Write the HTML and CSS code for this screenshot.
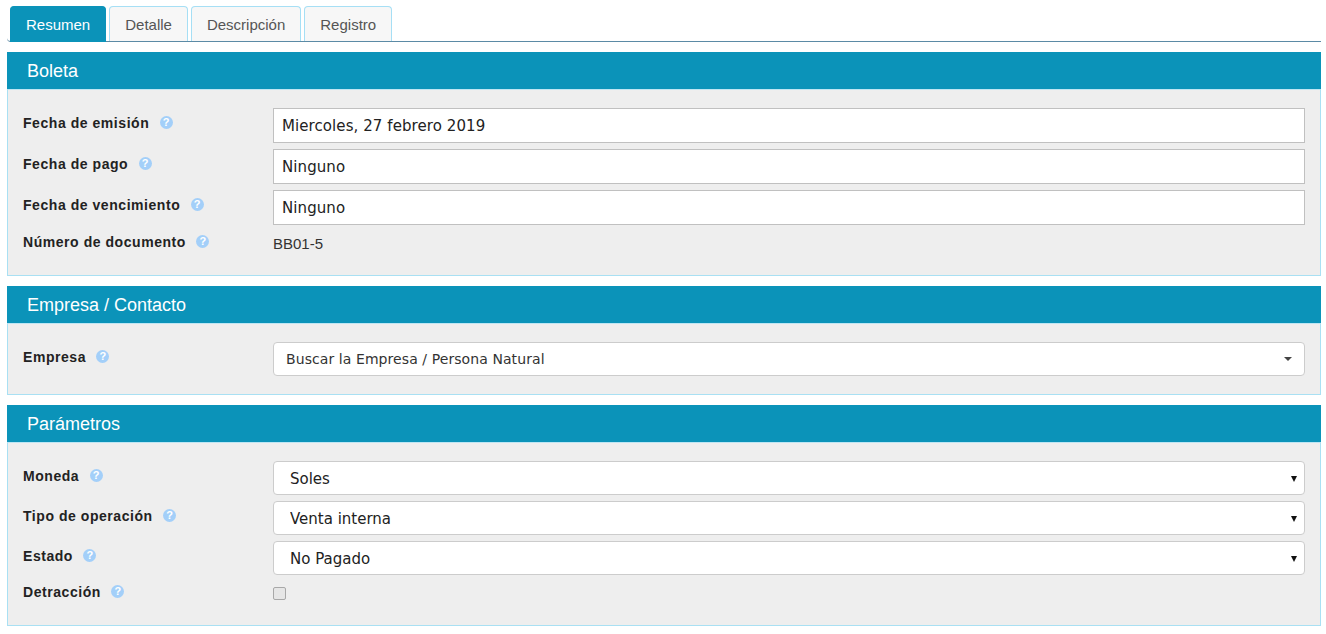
FILE: index.html
```html
<!DOCTYPE html>
<html lang="es">
<head>
<meta charset="utf-8">
<title>Boleta</title>
<link rel="stylesheet" href="styles.css">
</head>
<body>
<ul class="tabs">
  <li class="tab active">Resumen</li>
  <li class="tab">Detalle</li>
  <li class="tab">Descripción</li>
  <li class="tab">Registro</li>
</ul>

<section class="panel panel-boleta">
  <h2 class="panel-head">Boleta</h2>
  <div class="panel-body">
    <div class="row"><label class="label">Fecha de emisión <i class="help">?</i></label><input class="input" type="text" value="Miercoles, 27 febrero 2019"></div>
    <div class="row"><label class="label">Fecha de pago <i class="help">?</i></label><input class="input" type="text" value="Ninguno"></div>
    <div class="row"><label class="label">Fecha de vencimiento <i class="help">?</i></label><input class="input" type="text" value="Ninguno"></div>
    <div class="row row-static"><label class="label">Número de documento <i class="help">?</i></label><span class="static">BB01-5</span></div>
  </div>
</section>

<section class="panel panel-empresa">
  <h2 class="panel-head">Empresa / Contacto</h2>
  <div class="panel-body">
    <div class="row"><label class="label">Empresa <i class="help">?</i></label>
      <div class="combo"><span>Buscar la Empresa / Persona Natural</span><b class="combo-arrow"></b></div>
    </div>
  </div>
</section>

<section class="panel panel-params">
  <h2 class="panel-head">Parámetros</h2>
  <div class="panel-body">
    <div class="row row-select"><label class="label">Moneda <i class="help">?</i></label><div class="select-wrap"><select class="select"><option>Soles</option></select></div></div>
    <div class="row row-select"><label class="label">Tipo de operación <i class="help">?</i></label><div class="select-wrap"><select class="select"><option>Venta interna</option></select></div></div>
    <div class="row row-select"><label class="label">Estado <i class="help">?</i></label><div class="select-wrap"><select class="select"><option>No Pagado</option></select></div></div>
    <div class="row row-check"><label class="label">Detracción <i class="help">?</i></label><input class="check" type="checkbox"></div>
  </div>
</section>
</body>
</html>
```
FILE: styles.css
```css
* { box-sizing: border-box; }
html, body { height: 100%; }
body {
  margin: 0;
  padding: 6px 5px 0 7px;
  background: #fff;
  color: #222;
  font-family: "Liberation Sans", Arial, sans-serif;
  font-size: 14px;
  overflow: hidden;
}
.tabs {
  display: flex;
  gap: 3px;
  height: 36px;
  margin: 0 0 10px;
  padding: 0 0 0 3px;
  list-style: none;
  border-bottom: 1px solid #5b8aa5;
  border-bottom-left-radius: 4px;
}
.tab {
  height: 35px;
  padding: 0 15px;
  line-height: 36px;
  font-size: 15px;
  color: #555;
  background: #f7f7f7;
  border: 1px solid #a6dff5;
  border-bottom: 0;
  border-radius: 4px 4px 0 0;
}
.tab.active {
  height: 36px;
  color: #fff;
  background: #0b93b9;
  border-color: #0b93b9;
}
.panel { margin: 0 0 10px; }
.panel-head {
  height: 37px;
  margin: 0;
  padding: 1px 20px 0;
  font-size: 18px;
  font-weight: 400;
  line-height: 37px;
  color: #fff;
  background: #0b93b9;
}
.panel-body {
  padding: 18px 15px 0;
  background: #eee;
  border: 1px solid #a9e0f3;
  border-top-color: #bfe6f3;
}
.panel-boleta .panel-body { height: 187px; }
.panel-empresa .panel-body { height: 72px; }
.panel-params .panel-body { height: 184px; }
.row {
  display: grid;
  grid-template-columns: 250px 1fr;
  align-items: start;
  margin-bottom: 6px;
}
.label {
  padding-top: 5px;
  font-size: 14px;
  font-weight: 700;
  letter-spacing: 0.55px;
  line-height: 20px;
  color: #222;
  white-space: nowrap;
}
.help {
  display: inline-block;
  width: 13px;
  height: 13px;
  margin-left: 6px;
  border-radius: 50%;
  background: #a3cff9;
  color: #fff;
  font-family: "Liberation Sans", Arial, sans-serif;
  font-size: 11px;
  font-style: normal;
  font-weight: 700;
  letter-spacing: 0;
  line-height: 13px;
  text-align: center;
  vertical-align: 2px;
}
.input {
  display: block;
  width: 100%;
  height: 35px;
  padding: 0 8px;
  font-family: "DejaVu Sans", Verdana, sans-serif;
  font-size: 15px;
  letter-spacing: 0.08px;
  color: #222;
  background: #fff;
  border: 1px solid #c0c0c0;
  border-radius: 0;
  outline: 0;
}
.row-static .label { padding-top: 0; margin-top: 1px; }
.static { margin-top: 4px; font-size: 15px; color: #333; }
.combo {
  position: relative;
  height: 34px;
  padding: 0 12px;
  font-family: "DejaVu Sans", Verdana, sans-serif;
  font-size: 14px;
  letter-spacing: 0.08px;
  line-height: 32px;
  color: #333;
  background: #fff;
  border: 1px solid #ccc;
  border-radius: 4px;
}
.combo-arrow {
  position: absolute;
  top: 14px;
  right: 12px;
  width: 0;
  height: 0;
  border: 4px solid transparent;
  border-top-color: #444;
  border-bottom: 0;
}
.select-wrap { position: relative; }
.select-wrap::after {
  content: "";
  position: absolute;
  top: 15px;
  right: 8px;
  width: 0;
  height: 0;
  border: 3px solid transparent;
  border-top: 6px solid #111;
  border-bottom: 0;
  pointer-events: none;
}
.select {
  display: block;
  width: 100%;
  height: 34px;
  padding: 2px 16px 0;
  font-family: "DejaVu Sans", Verdana, sans-serif;
  font-size: 15px;
  color: #222;
  background: #fff;
  border: 1px solid #ccc;
  border-radius: 4px;
  appearance: none;
  -webkit-appearance: none;
  outline: 0;
}
.row-check .label { padding-top: 0; margin-top: 1px; }
.check {
  width: 13px;
  height: 13px;
  margin: 6px 0 0;
  background: #e6e6e6;
  border: 1px solid #a8a8a8;
  border-radius: 2px;
  appearance: none;
  -webkit-appearance: none;
}
```
